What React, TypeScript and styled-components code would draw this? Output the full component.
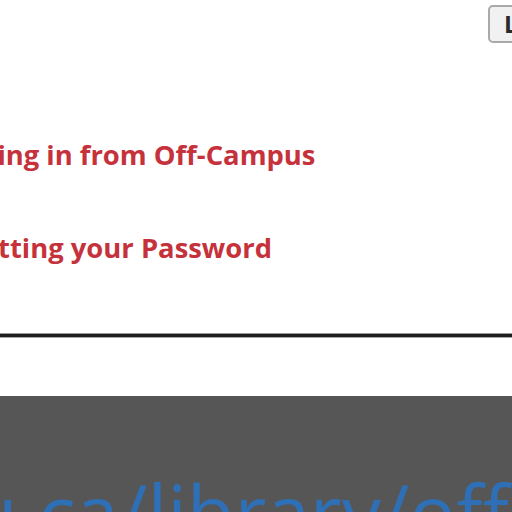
import styled, { createGlobalStyle } from "styled-components";

const GlobalStyle = createGlobalStyle`
  html, body {
    margin: 0;
    padding: 0;
    background: #ffffff;
    overflow: hidden;
  }
`;

const links = ["Logging in from Off-Campus", "Resetting your Password"];

const App = () => {
  return (
    <>
      <GlobalStyle />
      <Page>
        <TopPanel>
          <Header>
            <LoginButton>Login</LoginButton>
          </Header>
          <LinkList>
            {links.map((label) => (
              <HelpLink key={label}>{label}</HelpLink>
            ))}
          </LinkList>
          <Divider />
        </TopPanel>
        <AddressBar>
          <Url>www.mcgill.edu.ca/library/off-campus</Url>
        </AddressBar>
      </Page>
    </>
  );
};

export default App;

const Page = styled.div`
  width: 512px;
  height: 512px;
  overflow: hidden;
  display: flex;
  flex-direction: column;
  font-family: "Open Sans", "DejaVu Sans", sans-serif;
`;

const TopPanel = styled.div`
  height: 396px;
  flex-shrink: 0;
  display: flex;
  flex-direction: column;
  background: #ffffff;
`;

const Header = styled.div`
  display: flex;
  justify-content: flex-end;
  padding-top: 5px;
`;

const LoginButton = styled.div`
  height: 38px;
  box-sizing: border-box;
  margin-right: -73px;
  padding: 0 14px;
  border: 2px solid #a9a9a9;
  border-radius: 5px;
  background: #f1f1f1;
  color: #2a2a2a;
  font-size: 24px;
  font-weight: 700;
  line-height: 34px;
`;

const LinkList = styled.div`
  display: flex;
  flex-direction: column;
  gap: 66px;
  margin-top: 98px;
  margin-left: -66px;
`;

const HelpLink = styled.div`
  color: #c5323b;
  font-size: 27.4px;
  font-weight: 700;
  line-height: 27px;
  white-space: nowrap;
`;

const Divider = styled.div`
  height: 3px;
  margin-top: 73px;
  background: #1e1e1e;
  box-shadow: 0 -1px 0 #9a9a9a, 0 1px 0 #a8a8a8;
`;

const AddressBar = styled.div`
  flex: 1;
  background: #565656;
  padding-top: 77px;
  overflow: hidden;
`;

const Url = styled.div`
  color: #2f6fb6;
  font-size: 78px;
  line-height: 78px;
  white-space: nowrap;
  margin-left: -555px;
`;
